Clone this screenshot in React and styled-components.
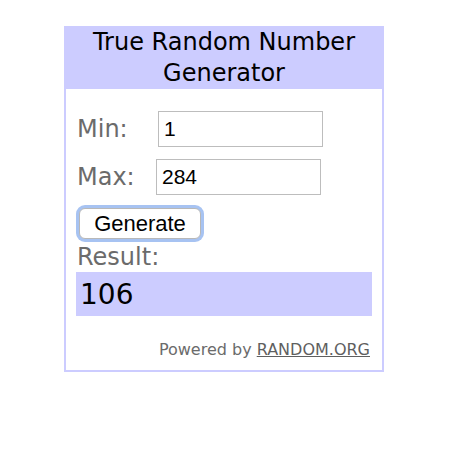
import React from "react";
import styled, { createGlobalStyle } from "styled-components";

const GlobalStyle = createGlobalStyle`
    html, body {
        margin: 0;
        padding: 0;
        background: #ffffff;
    }
`

const Page = styled.div`
    padding: 26px 0 0 64px;
    width: 460px;
    height: 452px;
    box-sizing: border-box;
`

const Widget = styled.div`
    width: 320px;
    height: 346px;
    box-sizing: border-box;
    border: 2px solid #ccccff;
    border-top: none;
    display: flex;
    flex-direction: column;
    font-family: "DejaVu Sans", Verdana, sans-serif;
`

const Header = styled.div`
    background-color: #ccccff;
    height: 63px;
    margin: 0 -2px;
    text-align: center;
    font-size: 24px;
    line-height: 31px;
    color: #000;
    padding-top: 1px;
    box-sizing: border-box;
`

const Body = styled.div`
    padding: 22px 10px 0 10px;
    display: flex;
    flex-direction: column;
`

const Row = styled.div`
    display: flex;
    align-items: center;
    height: 36px;
    margin-bottom: 12px;
`

const Label = styled.span`
    display: inline-block;
    width: ${props => props.width}px;
    font-size: 24px;
    color: #6b6b6b;
    padding-left: 1px;
    box-sizing: border-box;
`

const Field = styled.input`
    width: 165px;
    height: 36px;
    box-sizing: border-box;
    border: 1px solid #bdbdbd;
    padding: 0 5px;
    font-family: "Liberation Sans", Arial, sans-serif;
    font-size: 21px;
    color: #000;
    outline: none;
`

const Button = styled.button`
    align-self: flex-start;
    box-sizing: border-box;
    background: #ffffff;
    border: 1px solid #b8b8b8;
    border-radius: 6px;
    box-shadow: 0 0 0 3px #a7c3f2;
    margin-left: 3px;
    margin-top: 1px;
    width: 122px;
    height: 31px;
    font-family: "Liberation Sans", Arial, sans-serif;
    font-size: 22px;
    line-height: 28px;
    color: #000;
    padding: 0;
`

const ResultLabel = styled.div`
    font-size: 24px;
    color: #6b6b6b;
    margin-top: 4px;
    line-height: 28px;
    padding-left: 1px;
`

const ResultBox = styled.div`
    background-color: #ccccff;
    height: 44px;
    margin-top: 1px;
    padding-left: 4px;
    display: flex;
    align-items: center;
    font-size: 28px;
    color: #000;
`

const Footer = styled.div`
    text-align: right;
    margin-top: 24px;
    padding-right: 2px;
    font-size: 16px;
    color: #6b6b6b;

    a {
        color: #5f5f5f;
        text-decoration: underline;
    }
`

class App extends React.Component {
    render() {
        return (
            <Page>
                <GlobalStyle />
                <Widget>
                    <Header>
                        True Random Number
                        <br />
                        Generator
                    </Header>
                    <Body>
                        <Row>
                            <Label width={82}>Min:</Label>
                            <Field defaultValue="1" />
                        </Row>
                        <Row>
                            <Label width={80}>Max:</Label>
                            <Field defaultValue="284" />
                        </Row>
                        <Button>Generate</Button>
                        <ResultLabel>Result:</ResultLabel>
                        <ResultBox>106</ResultBox>
                        <Footer>
                            Powered by <a href="#">RANDOM.ORG</a>
                        </Footer>
                    </Body>
                </Widget>
            </Page>
        );
    }
}

export default App
